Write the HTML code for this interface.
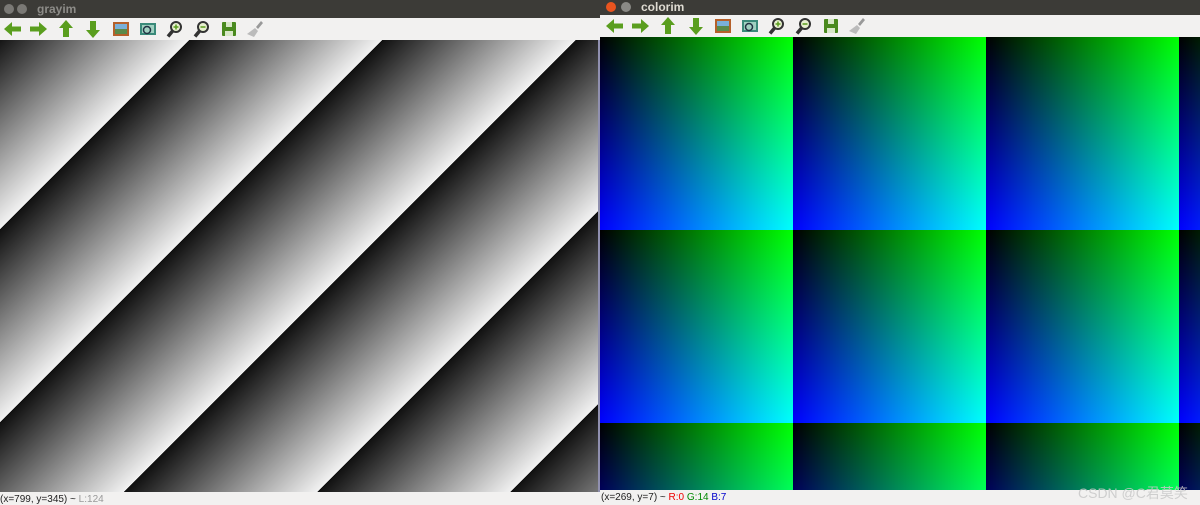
<!DOCTYPE html>
<html><head><meta charset="utf-8"><style>
*{margin:0;padding:0;box-sizing:border-box}
body{width:1200px;height:505px;overflow:hidden;background:#f2f1f0;position:relative;font-family:"Liberation Sans",sans-serif}
.abs{position:absolute}
.title{background:#3c3b37;color:#9b9a96;font-weight:bold;font-size:12px}
.tb{background:#f2f1f0}
.btn{position:absolute;width:10px;height:10px;border-radius:50%;background:#7a7975}
.status{font-size:10px;color:#222;white-space:nowrap}
.col{background-image:linear-gradient(to right,#000,#0f0),linear-gradient(to bottom,#000,#00f);background-size:193px 193px;background-blend-mode:screen}
.gray{background:repeating-linear-gradient(135deg,#101010 -3px,#f2f2f2 133.7px)}
</style></head><body>
<div class="abs title" style="left:0;top:0;width:600px;height:18px"></div>
<div class="btn" style="left:4px;top:4px"></div><div class="btn" style="left:17px;top:4px"></div>
<div class="abs" style="left:37px;top:2px;font-size:12px;font-weight:bold;color:#8d8c88">grayim</div>
<div class="abs tb" style="left:0;top:18px;width:600px;height:22px"></div>
<div class="abs gray" style="left:0;top:40px;width:600px;height:452px"></div>
<div class="abs" style="left:598px;top:40px;width:2px;height:452px;background:#9090b0"></div>
<div class="abs status" style="left:0;top:494px">(x=799, y=345) ~ <span style="color:#999">L:124</span></div>
<div class="abs title" style="left:600px;top:0;width:600px;height:15px"></div>
<div class="btn" style="left:606px;top:2px;background:#e9541f"></div><div class="btn" style="left:621px;top:2px;background:#8a8985"></div>
<div class="abs" style="left:641px;top:0px;font-size:12px;font-weight:bold;color:#dfdbd2">colorim</div>
<div class="abs tb" style="left:600px;top:15px;width:600px;height:22px"></div>
<div class="abs col" style="left:600px;top:37px;width:600px;height:453px"></div>
<div class="abs status" style="left:601px;top:492px">(x=269, y=7) ~ <span style="color:#e00">R:0</span> <span style="color:#080">G:14</span> <span style="color:#00c">B:7</span></div>
<div class="abs" style="left:1078px;top:483px;font-size:14px;color:rgba(200,200,200,0.85)">CSDN @C君莫笑</div>
<svg class="abs" style="left:0;top:0" width="1200" height="40">
<defs>
<g id="L"><path d="M0 0 l8 -7 v4.5 h9 v5 h-9 v4.5z" fill="#5a9e1e"/></g>
<g id="R"><path d="M17 0 l-8 -7 v4.5 h-9 v5 h9 v4.5z" fill="#5a9e1e"/></g>
<g id="U"><path d="M0 -9 l7 8 h-4 v9 h-6 v-9 h-4z" fill="#5a9e1e"/></g>
<g id="D"><path d="M0 9 l7 -8 h-4 v-9 h-6 v9 h-4z" fill="#5a9e1e"/></g>
<g id="P"><rect x="-8" y="-7" width="16" height="14" fill="#b5602a"/><rect x="-6" y="-5" width="12" height="10" fill="#5a8a4a"/><rect x="-6" y="-5" width="12" height="5" fill="#7ab0d8"/></g>
<g id="Q"><rect x="-8" y="-6" width="16" height="12" fill="#3a8a7a"/><rect x="-6" y="-4" width="12" height="8" fill="#a0d0c0"/><circle cx="-1" cy="1" r="3.5" fill="none" stroke="#234" stroke-width="1.5"/></g>
<g id="Z"><circle cx="1" cy="-2" r="5" fill="#e8f0d0" stroke="#333" stroke-width="2"/><path d="M-2 1.5 l-5 6" stroke="#333" stroke-width="3.5"/><path d="M-1.5 -2 h5 M1 -4.5 v5" stroke="#5a9e1e" stroke-width="1.5"/></g>
<g id="O"><circle cx="1" cy="-2" r="5" fill="#e8f0d0" stroke="#333" stroke-width="2"/><path d="M-2 1.5 l-5 6" stroke="#333" stroke-width="3.5"/><path d="M-1.5 -2 h5" stroke="#5a9e1e" stroke-width="1.5"/></g>
<g id="S"><rect x="-7" y="-7" width="14" height="14" rx="1" fill="#4a8a1e"/><rect x="-3" y="-7" width="6" height="5" fill="#d8e8c8"/><rect x="-4" y="2" width="8" height="5" fill="#d8e8c8"/></g>
<g id="B"><path d="M5 -8 l2 2 l-5 6 l-2 -2z" fill="#999"/><path d="M-1 -1 l3 3 l-4 6 l-7 -3z" fill="#bbb"/></g>
</defs>
<g transform="translate(0,29)"><use href="#L" x="4"/><use href="#R" x="30"/><use href="#U" x="66"/><use href="#D" x="93"/><use href="#P" x="121"/><use href="#Q" x="148"/><use href="#Z" x="175"/><use href="#O" x="202"/><use href="#S" x="229"/><use href="#B" x="256"/></g>
<g transform="translate(0,26)"><use href="#L" x="606"/><use href="#R" x="632"/><use href="#U" x="668"/><use href="#D" x="696"/><use href="#P" x="723"/><use href="#Q" x="750"/><use href="#Z" x="777"/><use href="#O" x="804"/><use href="#S" x="831"/><use href="#B" x="858"/></g>
</svg>
</body></html>
